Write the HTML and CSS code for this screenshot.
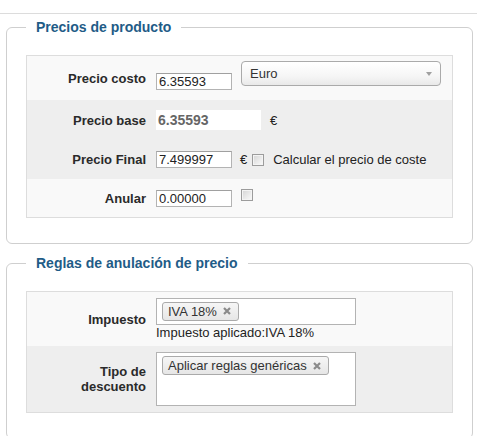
FILE: index.html
```html
<!DOCTYPE html>
<html lang="es">
<head>
<meta charset="utf-8">
<title>Precios de producto</title>
<link rel="stylesheet" href="styles.css">
</head>
<body>
<div class="topbar"></div>

<fieldset class="panel">
  <legend>Precios de producto</legend>
  <div class="table">
    <div class="row row-light row-cost">
      <div class="label">Precio costo</div>
      <div class="cell">
        <input class="text" type="text" value="6.35593">
        <div class="select">
          <span class="select-text">Euro</span>
          <span class="arrow"></span>
        </div>
      </div>
    </div>
    <div class="row row-gray row-base">
      <div class="label">Precio base</div>
      <div class="cell">
        <span class="value">6.35593</span>
        <span class="cur cur-base">€</span>
      </div>
    </div>
    <div class="row row-gray row-final">
      <div class="label">Precio Final</div>
      <div class="cell">
        <input class="text" type="text" value="7.499997">
        <span class="cur">€</span>
        <input class="check check-after-cur" type="checkbox">
        <span class="check-label">Calcular el precio de coste</span>
      </div>
    </div>
    <div class="row row-light row-cancel">
      <div class="label">Anular</div>
      <div class="cell">
        <input class="text" type="text" value="0.00000">
        <input class="check check-top" type="checkbox">
      </div>
    </div>
  </div>
</fieldset>

<fieldset class="panel panel-second">
  <legend>Reglas de anulación de precio</legend>
  <div class="table">
    <div class="row row-light row-tax">
      <div class="label">Impuesto</div>
      <div class="cell cell-col">
        <div class="tokens tokens-short">
          <span class="token">IVA 18%<svg class="x" width="8" height="8" viewBox="0 0 8 8"><path d="M1 1L7 7M7 1L1 7"/></svg></span>
        </div>
        <div class="note">Impuesto aplicado:IVA 18%</div>
      </div>
    </div>
    <div class="row row-gray row-disc">
      <div class="label">Tipo de<br>descuento</div>
      <div class="cell">
        <div class="tokens tokens-tall">
          <span class="token">Aplicar reglas genéricas<svg class="x" width="8" height="8" viewBox="0 0 8 8"><path d="M1 1L7 7M7 1L1 7"/></svg></span>
        </div>
      </div>
    </div>
  </div>
</fieldset>
</body>
</html>
```

FILE: styles.css
```css
body {
  margin: 0;
  font-family: "Liberation Sans", Arial, sans-serif;
  font-size: 13px;
  color: #222;
  background: #fff;
}

.topbar {
  height: 13px;
  border-bottom: 1px solid #dcdcdc;
}

.panel {
  margin: 5px 4px 0 6px;
  padding: 19px 19px 25px;
  border: 1px solid #cfcfcf;
  border-radius: 6px;
  min-width: 0;
}

.panel-second {
  margin-top: 11px;
}

.panel legend {
  padding: 0 10px;
  font-size: 14px;
  font-weight: bold;
  line-height: 17px;
  color: #1f5c87;
}

.table {
  border: 1px solid #dddddd;
}

.row {
  display: flex;
  align-items: center;
}

.row-light { background: #f9f9f9; }
.row-gray { background: #eeeeee; }

.row-cost { height: 44px; align-items: flex-start; }
.row-base { height: 40px; }
.row-final { height: 39px; }
.row-cancel { height: 38px; }
.row-tax { height: 54px; }
.row-disc { height: 66px; }

.label {
  flex: none;
  width: 129px;
  padding-right: 10px;
  box-sizing: border-box;
  text-align: right;
  font-weight: bold;
  line-height: 15px;
  color: #2a2a2a;
}

.row-cost .label { margin-top: 15px; }

.cell {
  display: flex;
  align-items: center;
}

.row-cost .cell { align-items: flex-start; }

.cell-col {
  flex-direction: column;
  align-items: flex-start;
}

.text {
  box-sizing: border-box;
  width: 76px;
  height: 17px;
  margin: 0;
  padding: 0 2px;
  border: 1px solid #b3b3b3;
  border-top-color: #a0a0a0;
  background: #fff;
  font-family: "Liberation Sans", Arial, sans-serif;
  font-size: 13px;
  color: #222;
  outline: none;
}

.row-cost .text { margin-top: 17px; }

.select {
  box-sizing: border-box;
  width: 200px;
  height: 25px;
  margin: 5px 0 0 9px;
  padding: 0 8px 0 8px;
  border: 1px solid #aaaaaa;
  border-radius: 4px;
  background: linear-gradient(#ffffff 0%, #f6f6f6 60%, #e9e9e9 100%);
  display: flex;
  align-items: center;
  justify-content: space-between;
}

.select-text {
  line-height: 15px;
  color: #333;
}

.arrow {
  width: 0;
  height: 0;
  border-left: 3.5px solid transparent;
  border-right: 3.5px solid transparent;
  border-top: 4px solid #a0a0a0;
}

.value {
  box-sizing: border-box;
  width: 105px;
  height: 20px;
  padding-left: 2px;
  background: #fff;
  font-size: 14px;
  font-weight: bold;
  line-height: 20px;
  color: #666;
}

.cur {
  margin-left: 8px;
  line-height: 15px;
}

.cur-base { margin-left: 9px; }

.check {
  -webkit-appearance: none;
  appearance: none;
  box-sizing: border-box;
  width: 12px;
  height: 12px;
  margin: 0;
  border: 1px solid #9c9c9c;
  border-radius: 0;
  background: linear-gradient(135deg, #d4d4d4 0%, #ececec 60%, #fafafa 100%);
  box-shadow: inset 0 0 0 1px #f4f4f4;
}

.check-after-cur { margin-left: 5px; }

.check-top {
  align-self: flex-start;
  margin: -1px 0 0 9px;
}

.check-label {
  margin-left: 9px;
  line-height: 15px;
}

.tokens {
  box-sizing: border-box;
  width: 200px;
  border: 1px solid #b3b3b3;
  background: #fff;
  padding: 3px 5px 0;
}

.tokens-short { height: 27px; }
.tokens-tall { height: 54px; }

.token {
  box-sizing: border-box;
  display: inline-flex;
  align-items: center;
  height: 19px;
  padding: 0 7px 0 5px;
  border: 1px solid #aaaaaa;
  border-radius: 3px;
  background: linear-gradient(#f6f6f6, #e6e6e6);
  line-height: 15px;
  color: #333;
}

.x {
  margin-left: 6px;
  fill: none;
  stroke: #8a8a8a;
  stroke-width: 2.2;
}

.note {
  line-height: 16px;
  color: #222;
}
```
